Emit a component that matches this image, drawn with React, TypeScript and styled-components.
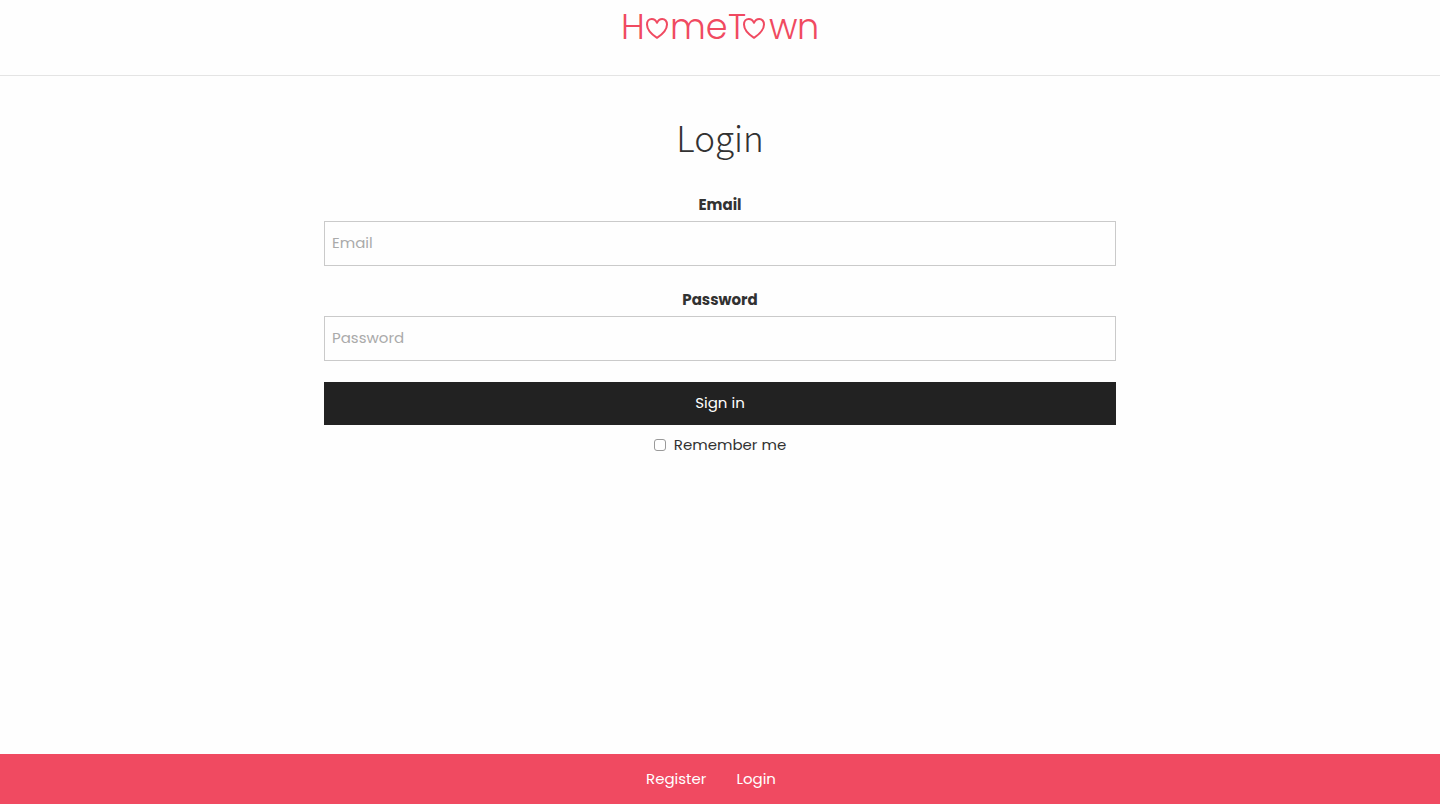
import React from "react";
import styled, { createGlobalStyle } from "styled-components";

const brand = "#f04a61";
const ink = "#323232";

const GlobalStyle = createGlobalStyle`
  *, *::before, *::after { box-sizing: border-box; }
  body {
    margin: 0;
    background: #fefefe;
    color: ${ink};
    font-family: Poppins, Inter, sans-serif;
    font-size: 15px;
    line-height: 24px;
    -webkit-font-smoothing: antialiased;
  }
`;

const Page = styled.div`
  display: flex;
  flex-direction: column;
  min-height: 100vh;
`;

const Header = styled.header`
  display: flex;
  justify-content: center;
  padding: 0 0 15px;
  border-bottom: 1px solid #e4e4e4;
`;

const HomeLink = styled.a`
  display: block;
  color: ${brand};
`;

const LogoMark = styled.svg`
  display: block;
  width: 200px;
  height: 60px;
  font-family: Poppins, Inter, sans-serif;
  font-size: 35px;
  font-weight: 300;
  fill: currentColor;
`;

const Main = styled.main`
  flex: 1;
  display: flex;
  flex-direction: column;
  align-items: center;
  padding: 36px 0;
`;

const Title = styled.h1`
  margin: 0 0 30px;
  font-family: "Source Sans Pro", "Noto Sans CJK SC", sans-serif;
  font-size: 35px;
  font-weight: 300;
  line-height: 50px;
`;

const Form = styled.form`
  display: flex;
  flex-direction: column;
  width: 55%;
`;

const Field = styled.div`
  display: flex;
  flex-direction: column;
  align-items: center;
  gap: 3px;
  margin-bottom: 21px;
`;

const FieldLabel = styled.label`
  font-weight: 700;
  line-height: 26px;
`;

const TextInput = styled.input`
  width: 100%;
  height: 45px;
  padding: 0 7px 2px;
  border: 1px solid #cacaca;
  border-radius: 0;
  background: #fefefe;
  color: ${ink};
  font: inherit;

  &::placeholder { color: #aaaaaa; opacity: 1; }
`;

const SubmitButton = styled.button`
  height: 43px;
  margin-bottom: 8px;
  padding: 0 8px 2px;
  border: 0;
  background: #222222;
  color: #ffffff;
  font: inherit;
  cursor: pointer;
`;

const Remember = styled.label`
  display: flex;
  align-items: center;
  justify-content: center;
  gap: 8px;
`;

const Checkbox = styled.input`
  appearance: none;
  width: 12px;
  height: 12px;
  margin: 0;
  border: 1px solid #9a9a9a;
  border-radius: 3px;
  background: #ffffff;

  &:checked { background: ${brand}; }
`;

const Footer = styled.footer`
  background: ${brand};
`;

const FooterNav = styled.nav`
  display: flex;
  justify-content: center;
  gap: 30px;
  padding: 13px 18px 13px 0;
`;

const FooterLink = styled.a`
  color: #ffffff;
  text-decoration: none;
`;

const heart =
  "M11 4.8C9.8 2.3 7.8 1 5.8 1C3 1 1 3.2 1 6.4C1 11.6 5.6 16.2 11 19.8C16.4 16.2 21 11.6 21 6.4C21 3.2 19 1 16.2 1C14.2 1 12.2 2.3 11 4.8Z";

function Logo() {
  return (
    <LogoMark viewBox="0 0 200 60" role="img" aria-label="HomeTown">
      <text x="1" y="39">H</text>
      <text x="50" y="39">me</text>
      <text x="108" y="39">T</text>
      <text x="149" y="39">w</text>
      <text x="177" y="39">n</text>
      <g fill="none" stroke="currentColor" strokeWidth="2" strokeLinejoin="round">
        <path d={heart} transform="translate(26 18)" />
        <path d={heart} transform="translate(123 18)" />
      </g>
    </LogoMark>
  );
}

export default function App() {
  return (
    <Page>
      <GlobalStyle />
      <Header>
        <HomeLink href="#home">
          <Logo />
        </HomeLink>
      </Header>
      <Main>
        <Title>Login</Title>
        <Form onSubmit={(event: React.FormEvent) => event.preventDefault()}>
          <Field>
            <FieldLabel htmlFor="email">Email</FieldLabel>
            <TextInput id="email" type="email" placeholder="Email" />
          </Field>
          <Field>
            <FieldLabel htmlFor="password">Password</FieldLabel>
            <TextInput id="password" type="password" placeholder="Password" />
          </Field>
          <SubmitButton type="submit">Sign in</SubmitButton>
          <Remember>
            <Checkbox type="checkbox" />
            Remember me
          </Remember>
        </Form>
      </Main>
      <Footer>
        <FooterNav>
          <FooterLink href="#register">Register</FooterLink>
          <FooterLink href="#login">Login</FooterLink>
        </FooterNav>
      </Footer>
    </Page>
  );
}
